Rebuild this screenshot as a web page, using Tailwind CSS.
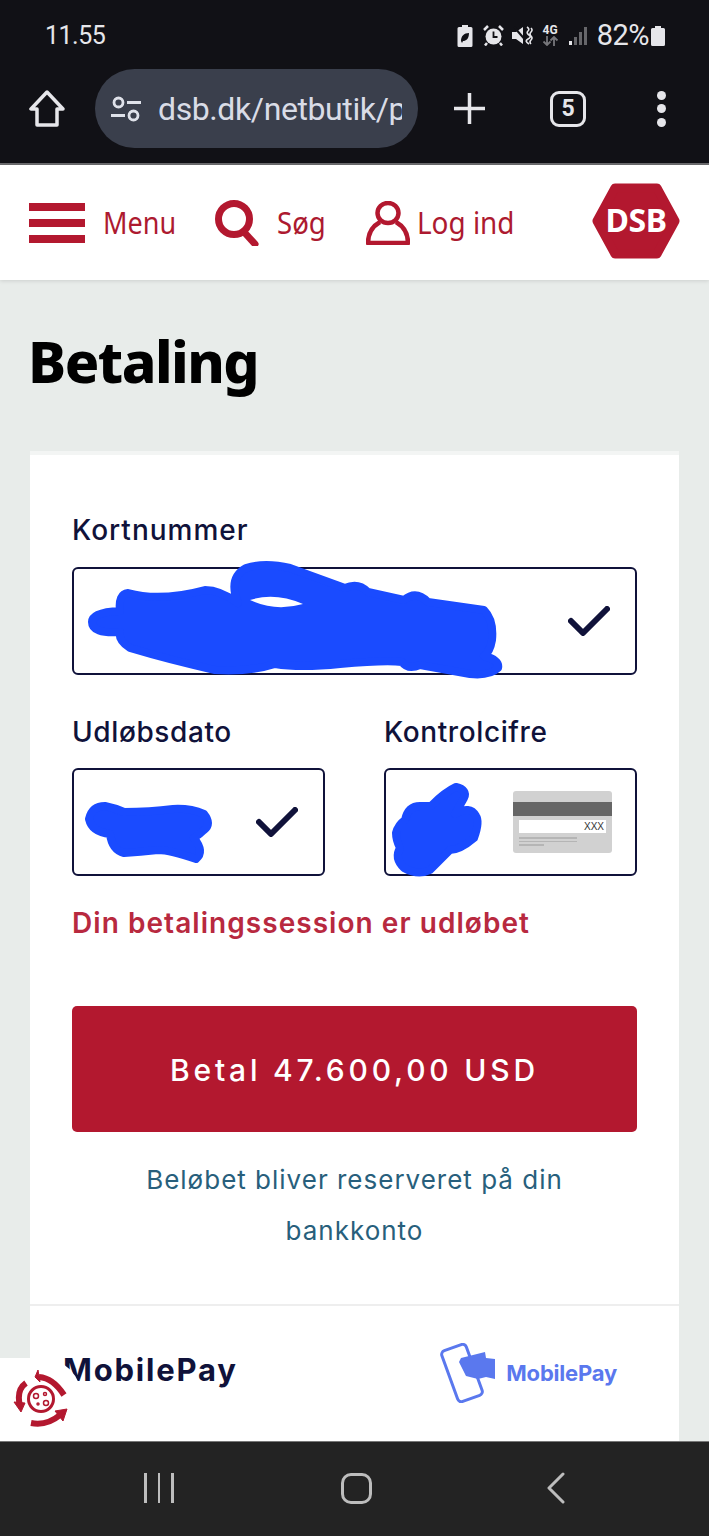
<!DOCTYPE html>
<html lang="da">

<head>
    <meta charset="UTF-8" />
    <title>Betaling</title>
    <script src="https://cdn.jsdelivr.net/npm/@tailwindcss/browser@4"></script>
</head>

<body class="relative w-[709px] h-[1536px] overflow-hidden flex flex-col bg-[#e8ecea] font-['Inter','Liberation_Sans',sans-serif]">

    <!-- Statuslinje og browser -->
    <div class="h-[165px] shrink-0 bg-[#111116] border-b-2 border-[#6b6b6e] text-[#e6e6ea] font-['Roboto',sans-serif]">
        <div class="h-[69px] pt-[2px] pl-[45px] pr-[44px] flex items-center justify-between">
            <span class="text-[25px] leading-none tracking-[-0.5px]">11.55</span>
            <div class="flex items-center">
                <svg class="w-[16px] h-[22px] mr-[10px]" viewBox="0 0 16 22" fill="#e6e6ea">
                    <path d="M5 0h6v2h3a1.5 1.5 0 011.5 1.5V20.500A1.500 1.500 0 0114 22H2a1.500 1.500 0 01-1.500-1.500V3.500A1.500 1.500 0 012 2h3z" />
                    <path d="M4 16c0-5 3-8 8-8 0 6-3 8-6 8l-1 2z" fill="#111116" />
                </svg>
                <svg class="w-[21px] h-[21px] mr-[8px]" viewBox="0 0 21 21">
                    <circle cx="10.500" cy="11.500" r="8" fill="#e6e6ea" />
                    <path d="M10.500 6.500v5.500h4" stroke="#111116" stroke-width="1.800" fill="none" />
                    <path d="M1 5l4-4M20 5l-4-4M4 18l-2 2.500M17 18l2 2.500" stroke="#e6e6ea" stroke-width="2.500" />
                </svg>
                <svg class="w-[22px] h-[21px] mr-[8px]" viewBox="0 0 22 21" fill="#e6e6ea">
                    <path d="M0 7h4L11 2v17L4 14H0z" />
                    <path d="M2 2l14 16" stroke="#111116" stroke-width="2" />
                    <path d="M15 2q3 2 1 4t1 4-1 4 1 5M19 3q2 2 0 4t0 4 0 4 0 4" stroke="#e6e6ea" stroke-width="1.600" fill="none" />
                </svg>
                <div class="w-[17px] h-[22px] mr-[9px] flex flex-col items-center text-[12px] leading-[11px] font-bold">
                    <span>4G</span>
                    <svg class="w-[17px] h-[10px]" viewBox="0 0 17 10" stroke="#77777b" stroke-width="1.800" fill="none">
                        <path d="M5 0v9M1.500 5.500L5 9l3.500-3.500M12 10V1M8.500 4.500L12 1l3.500 3.500" />
                    </svg>
                </div>
                <svg class="w-[20px] h-[20px] mr-[9px]" viewBox="0 0 20 20">
                    <rect x="1" y="15" width="3" height="4" fill="#e6e6ea" />
                    <rect x="6" y="11" width="3" height="8" fill="#66666a" />
                    <rect x="11" y="6" width="3" height="13" fill="#66666a" />
                    <rect x="16" y="1" width="3" height="18" fill="#66666a" />
                </svg>
                <span class="text-[29px] leading-none tracking-[-0.5px] mr-[2px]">82%</span>
                <svg class="w-[14px] h-[20px]" viewBox="0 0 14 20" fill="#e6e6ea">
                    <path d="M4 0h6v2h2.500A1.500 1.500 0 0114 3.500v15a1.500 1.500 0 01-1.500 1.500h-11A1.500 1.500 0 010 18.500v-15A1.500 1.500 0 011.500 2H4z" />
                </svg>
            </div>
        </div>
        <div class="h-[79px] flex items-center pl-[29px]">
            <svg class="w-[36px] h-[37px] shrink-0" viewBox="0 0 36 37" fill="none" stroke="#e6e6ea" stroke-width="3.500" stroke-linejoin="round">
                <path d="M18 2L2 19h6v16h20V19h6z" />
            </svg>
            <div class="ml-[30px] w-[323px] h-[79px] rounded-full bg-[#3a3f4c] flex items-center pl-[16px] overflow-hidden">
                <svg class="w-[30px] h-[30px] shrink-0" viewBox="0 0 30 30" fill="none" stroke="#dfe2ea" stroke-width="2.800">
                    <circle cx="7.500" cy="8.500" r="4.500" />
                    <path d="M16 8.500h14M0 21.500h14" />
                    <circle cx="22.500" cy="21.500" r="4.500" />
                </svg>
                <div class="ml-[17px] w-[244px] overflow-hidden whitespace-nowrap text-[32px] tracking-[-0.4px] leading-none text-[#d9dce6]">dsb.dk/netbutik/p</div>
            </div>
            <svg class="ml-[36px] w-[31px] h-[31px] shrink-0" viewBox="0 0 31 31" stroke="#e6e6ea" stroke-width="3.500">
                <path d="M15.500 0v31M0 15.500h31" />
            </svg>
            <div class="ml-[65px] w-[36px] h-[36px] shrink-0 rounded-[9px] border-[3.500px] border-[#e6e6ea] flex items-center justify-center text-[23px] font-bold leading-none">5</div>
            <div class="ml-[71px] flex flex-col gap-[4.500px]">
                <span class="block w-[9px] h-[9px] rounded-full bg-[#e6e6ea]"></span>
                <span class="block w-[9px] h-[9px] rounded-full bg-[#e6e6ea]"></span>
                <span class="block w-[9px] h-[9px] rounded-full bg-[#e6e6ea]"></span>
            </div>
        </div>
    </div>

    <!-- DSB menu -->
    <header class="h-[115px] shrink-0 bg-white shadow-[0_1px_4px_rgba(0,0,0,0.12)] flex items-center pl-[29px] text-[#ad1a30] font-['Noto_Sans',sans-serif] text-[30px] leading-none">
        <div class="w-[56px] h-[40px] flex flex-col justify-between">
            <span class="block h-[8px] bg-[#b3182f]"></span>
            <span class="block h-[8px] bg-[#b3182f]"></span>
            <span class="block h-[8px] bg-[#b3182f]"></span>
        </div>
        <span class="ml-[18px] scale-x-[0.9] origin-left w-[72px]">Menu</span>
        <svg class="ml-[40px] w-[44px] h-[46px]" viewBox="0 0 44 46" fill="none" stroke="#b3182f" stroke-linecap="round">
            <circle cx="19" cy="19" r="15.500" stroke-width="7" />
            <path d="M29 32l11 12" stroke-width="7" />
        </svg>
        <span class="ml-[18px] scale-x-[0.92] origin-left w-[50px]">Søg</span>
        <svg class="ml-[39px] w-[44px] h-[44px]" viewBox="0 0 44 44" fill="none" stroke="#b3182f" stroke-width="4.500" stroke-linejoin="round">
            <ellipse cx="22" cy="12" rx="10.500" ry="10" />
            <path d="M14 21C7 25 2 31 2 42h40c0-11-5-17-12-21" />
        </svg>
        <span class="ml-[7px] scale-x-[0.93] origin-left w-[105px] whitespace-nowrap">Log ind</span>
        <svg class="ml-[70px] w-[88px] h-[76px] -translate-y-[2px]" viewBox="0 0 88 76">
            <polygon points="23,5 65,5 83,38 65,71 23,71 5,38" fill="#b3182f" stroke="#b3182f" stroke-width="9" stroke-linejoin="round" />
            <text x="44" y="49" text-anchor="middle" fill="#ffffff" font-family="Noto Sans" font-weight="700" font-size="32" letter-spacing="-0.5">DSB</text>
        </svg>
    </header>

    <!-- Indhold -->
    <main class="flex-1 px-[30px] min-h-0">
        <h1 class="mt-[47px] -ml-[2px] h-[68px] text-[57px] leading-[68px] font-extrabold text-black font-['Noto_Sans',sans-serif] tracking-[-1.500px]">Betaling</h1>

        <section class="mt-[56px] h-[1010px] bg-white border-t-[4px] border-[#f3f5f4] text-[#10123a]">
            <div class="px-[42px] pt-[59px]">
                <label class="block text-[28px] leading-[32px] font-medium tracking-[1px]">Kortnummer</label>
                <div class="mt-[21px] h-[108px] border-2 border-[#10123a] rounded-[6px] flex items-center justify-end pr-[25px]">
                    <svg class="w-[42px] h-[30px]" viewBox="0 0 42 30" fill="none" stroke="#10123a" stroke-width="6" stroke-linecap="round" stroke-linejoin="round">
                        <path d="M3 15l12 12L39 3" />
                    </svg>
                </div>

                <div class="mt-[41px] grid grid-cols-[253px_253px] justify-between">
                    <div>
                        <label class="block text-[28px] leading-[32px] font-medium tracking-[0.6px]">Udløbsdato</label>
                        <div class="mt-[20px] h-[108px] border-2 border-[#10123a] rounded-[6px] flex items-center justify-end pr-[25px]">
                            <svg class="w-[42px] h-[30px]" viewBox="0 0 42 30" fill="none" stroke="#10123a" stroke-width="6" stroke-linecap="round" stroke-linejoin="round">
                                <path d="M3 15l12 12L39 3" />
                            </svg>
                        </div>
                    </div>
                    <div>
                        <label class="block text-[28px] leading-[32px] font-medium tracking-[0.6px]">Kontrolcifre</label>
                        <div class="mt-[20px] h-[108px] border-2 border-[#10123a] rounded-[6px] flex items-center justify-end pr-[23px]">
                            <div class="w-[99px] h-[62px] rounded-[3px] bg-[#d1d1d1] pt-[11px]">
                                <div class="h-[14px] bg-[#666666]"></div>
                                <div class="mt-[4px] mx-[6px] h-[13px] bg-white text-right pr-[2px] text-[10px] leading-[13px] text-[#333] font-['Liberation_Sans',sans-serif]">XXX</div>
                                <div class="mt-[4px] ml-[6px] w-[58px] h-[1.500px] bg-[#b5b5b5]"></div>
                                <div class="mt-[2px] ml-[6px] w-[58px] h-[1.500px] bg-[#b5b5b5]"></div>
                                <div class="mt-[2px] ml-[6px] w-[25px] h-[1.500px] bg-[#b5b5b5]"></div>
                            </div>
                        </div>
                    </div>
                </div>

                <p class="mt-[30px] text-[28px] leading-[34px] font-semibold tracking-[1.050px] text-[#b8293f]">Din betalingssession er udløbet</p>

                <button class="mt-[66px] w-full h-[126px] rounded-[5px] bg-[#b3182f] text-white text-[30px] font-medium tracking-[3.800px] pt-[2px]">Betal 47.600,00 USD</button>

                <p class="mt-[22px] mx-auto w-[460px] text-center text-[26px] leading-[51px] tracking-[1px] text-[#285f7c]">Beløbet bliver reserveret på din bankkonto</p>
            </div>

            <div class="mt-[48px] border-t-2 border-[#eeeeee] h-[137px] pl-[33px] pr-[62px] flex justify-between items-start">
                <span class="mt-[44px] text-[31px] leading-[40px] font-bold tracking-[1.800px] text-[#10123a]">MobilePay</span>
                <div class="mt-[37px] flex items-center">
                    <svg class="w-[56px] h-[60px]" viewBox="0 0 56 60" fill="none">
                        <rect x="9" y="3" width="26" height="54" rx="4" transform="rotate(-20 22 30)" stroke="#5a78ee" stroke-width="3" />
                        <path d="M21 15l24-6 1 6 9 1v20l-9-2-8 2-12-3-7-14z" fill="#5a78ee" />
                    </svg>
                    <span class="ml-[10px] text-[22px] font-bold text-[#5a78ee] tracking-[-0.2px] leading-none">MobilePay</span>
                </div>
            </div>
        </section>
    </main>

    <!-- Samsung navigation -->
    <nav class="absolute left-0 right-0 bottom-0 h-[95px] bg-[#232323] border-t border-[#777] flex items-start">
        <div class="ml-[144px] mt-[31px] flex gap-[11px]">
            <span class="block w-[2.500px] h-[30px] bg-[#bdbdbd]"></span>
            <span class="block w-[2.500px] h-[30px] bg-[#bdbdbd]"></span>
            <span class="block w-[2.500px] h-[30px] bg-[#bdbdbd]"></span>
        </div>
        <div class="ml-[167px] mt-[31px] w-[31px] h-[31px] rounded-[10px] border-[3px] border-[#bdbdbd]"></div>
        <svg class="ml-[174px] mt-[30px] w-[20px] h-[32px]" viewBox="0 0 20 32" fill="none" stroke="#bdbdbd" stroke-width="3" stroke-linecap="round" stroke-linejoin="round">
            <path d="M17 2L3 16l14 14" />
        </svg>
    </nav>

    <!-- Tilgængelighedsknap oven på indholdet -->
    <div class="absolute left-0 top-[1358px] w-[30px] h-[83px] bg-white"></div>
    <div class="absolute left-[-2px] top-[1357px] w-[84px] h-[84px] rounded-full bg-white"></div>
    <svg class="absolute left-[13px] top-[1370px] w-[56px] h-[58px]" viewBox="0 0 56 58" fill="none" stroke="#b3182f">
        <circle cx="28" cy="29" r="12.500" stroke-width="3" />
        <circle cx="23" cy="26" r="2.500" stroke-width="1.500" />
        <circle cx="32" cy="24" r="1.500" stroke-width="1.500" />
        <circle cx="33" cy="33" r="2.500" stroke-width="1.500" />
        <circle cx="25" cy="34" r="1" stroke-width="1.500" />
        <path d="M26 7q14 1 25 18" stroke-width="6" />
        <path d="M25 0l-3 7 5 5z" fill="#b3182f" stroke-width="1" />
        <path d="M13 13Q3 20 7 36" stroke-width="6" />
        <path d="M1 32l7 10 4-9z" fill="#b3182f" stroke-width="1" />
        <path d="M18 53q16 3 29-8" stroke-width="6" />
        <path d="M54 39l-12 2 8 10z" fill="#b3182f" stroke-width="1" />
    </svg>

    <!-- Blå overstregninger -->
    <svg class="absolute inset-0 w-[709px] h-[1536px] pointer-events-none" viewBox="0 0 709 1536" fill="#1a4bff" stroke="#1a4bff" stroke-width="8" stroke-linejoin="round">
        <path d="M92 622Q92 612 120 611Q118 594 128 593Q160 602 205 590Q220 590 238 603Q228 578 246 568Q265 562 290 568L345 588Q358 582 368 592L404 600Q416 590 428 602L484 610Q494 620 492 640Q490 652 484 656Q500 660 498 668Q490 676 470 674L420 665Q408 670 402 662Q385 660 340 664Q300 668 275 664Q250 672 215 670Q170 660 130 648Q118 640 120 632Q92 634 92 622Z" />
        <path d="M250 600Q275 592 303 604Q275 612 250 600Z" fill="#ffffff" stroke="none" />
        <path d="M89 819Q92 806 105 806Q115 808 124 812Q150 812 173 809Q190 808 204 814Q212 824 204 830Q200 834 194 838Q205 852 196 859Q170 850 158 850Q140 852 124 853Q112 850 110 834Q92 832 89 819Z" />
        <path d="M396 833Q398 825 405 820Q408 806 420 806L431 806Q445 792 456 787Q468 790 464 798L455 814Q470 805 476 816Q480 822 474 838Q460 850 450 850Q440 860 430 870Q418 876 404 868Q394 858 400 848Q396 840 396 833Z" />
    </svg>

</body>

</html>
